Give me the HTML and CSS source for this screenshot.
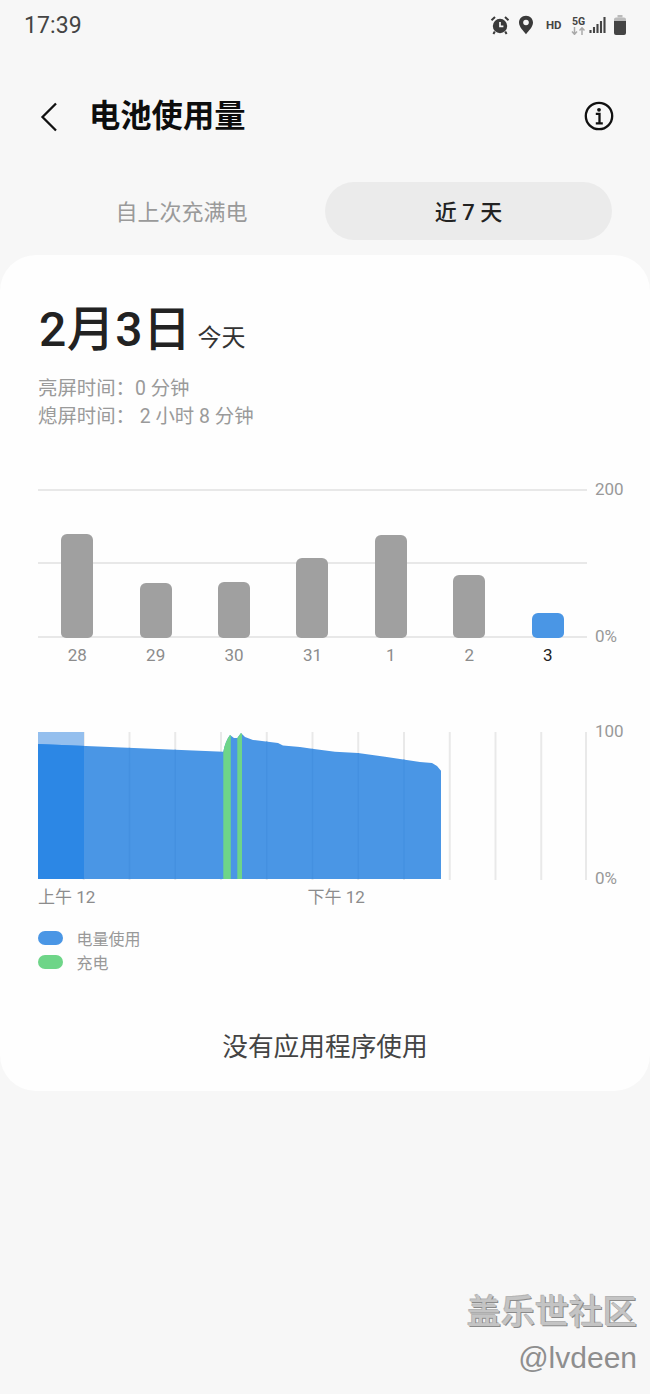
FILE: index.html
```html
<!DOCTYPE html>
<html lang="zh-CN">
<head>
<meta charset="utf-8">
<title>电池使用量</title>
<link rel="stylesheet" href="styles.css">
</head>
<body>
<div class="phone">
  <div class="status">
    <span class="clock">17:39</span>
    <div class="status-icons">
      <svg class="ic-alarm" width="20" height="20" viewBox="0 0 20 20"><circle cx="10" cy="11" r="7.2" fill="#3a3a3a"/><path d="M10 7v4.4h3.4" fill="none" stroke="#f7f7f7" stroke-width="1.7"/><path d="M1.5 5.2 5 2M18.5 5.2 15 2M4.8 16.5 3.4 19M15.2 16.5 16.6 19" stroke="#3a3a3a" stroke-width="2" fill="none"/></svg>
      <svg class="ic-pin" width="16" height="20" viewBox="0 0 16 20"><path d="M8 .8C3.8.8 1 3.9 1 7.6c0 4.6 4.7 8.6 7 11.6 2.300-3 7-7 7-11.600C15 3.900 12.200.8 8 .8Z" fill="#3a3a3a"/><circle cx="8" cy="7.500" r="2.800" fill="#f7f7f7"/></svg>
      <span class="hd">HD</span>
      <div class="net">
        <span class="five-g">5G</span>
        <svg width="15" height="8" viewBox="0 0 15 8"><path d="M3.500 0v7M1 4.500l2.500 2.800L6 4.500" fill="none" stroke="#aaa" stroke-width="1.500"/><path d="M11 8V1M8.500 3.500 11 .8l2.500 2.700" fill="none" stroke="#aaa" stroke-width="1.500"/></svg>
      </div>
      <svg class="ic-signal" width="17" height="18" viewBox="0 0 17 18"><path d="M1.500 14v3M5 11v6M8.500 8v9M12 5v12M15.500 1v16" stroke="#444" stroke-width="2.100"/></svg>
      <svg class="ic-battery" width="14" height="20" viewBox="0 0 14 20"><path d="M4.500 0h5v2.500h-5z" fill="#bbb"/><path d="M1 4.500A2 2 0 0 1 3 2.500h8a2 2 0 0 1 2 2V6H1z" fill="#bbb"/><path d="M1 6h12v12a2 2 0 0 1-2 2H3a2 2 0 0 1-2-2z" fill="#444"/></svg>
    </div>
  </div>

  <header class="appbar">
    <svg class="back" width="18" height="30" viewBox="0 0 18 30"><path d="M16 1.500 2.500 15 16 28.500" fill="none" stroke="#111" stroke-width="2.300"/></svg>
    <h1 class="title">电池使用量</h1>
    <svg class="info" width="30" height="30" viewBox="0 0 30 30"><circle cx="15" cy="15" r="13.200" fill="none" stroke="#111" stroke-width="2.300"/><circle cx="15" cy="8.800" r="1.900" fill="#111"/><path d="M11.800 12.800H15.500V22M11.800 22.300h7" fill="none" stroke="#111" stroke-width="2.300"/></svg>
  </header>

  <div class="tabs">
    <div class="tab">自上次充满电</div>
    <div class="tab tab-active">近 7 天</div>
  </div>

  <main class="card">
    <div class="date-row">
      <span class="date">2月3日</span>
      <span class="today">今天</span>
    </div>
    <div class="stats">
      <div>亮屏时间：0 分钟</div>
      <div>熄屏时间： 2 小时 8 分钟</div>
    </div>

    <section class="chart bar-chart">
      <div class="plot bar-plot">
        <div class="col"><div class="bar" style="height:104px"></div></div>
        <div class="col"><div class="bar" style="height:55px"></div></div>
        <div class="col"><div class="bar" style="height:56px"></div></div>
        <div class="col"><div class="bar" style="height:80px"></div></div>
        <div class="col"><div class="bar" style="height:103px"></div></div>
        <div class="col"><div class="bar" style="height:63px"></div></div>
        <div class="col"><div class="bar bar-now" style="height:25px"></div></div>
      </div>
      <div class="axis axis-bar"><span>200</span><span>0%</span></div>
      <div class="days">
        <span>28</span><span>29</span><span>30</span><span>31</span><span>1</span><span>2</span><span class="day-now">3</span>
      </div>
    </section>

    <section class="chart area-chart">
      <svg class="area" width="549" height="150" viewBox="38 731 549 150">
        <defs>
          <clipPath id="fill-clip"><path d="M38 744 223.300 751.700C224.500 745 227 739 230 735L234 738 237.300 738 241 733 245 737 253 740 278 743 283 745.500 300 747 312 748.700 335 751.700 358 753 385 756.700 420 762 432 763 437 766 441 770.700V879H38Z"/></clipPath>
        </defs>
        <path d="M83.750 732V880M129.500 732V880M175.250 732V880M221 732V880M266.750 732V880M312.500 732V880M358.250 732V880M404 732V880M449.750 732V880M495.500 732V880M541.250 732V880M586 732V880" stroke="#e9e9e9" stroke-width="2"/>
        <rect x="38" y="732" width="46" height="14" fill="#94bfee"/>
        <g clip-path="url(#fill-clip)">
          <rect x="38" y="731" width="404" height="149" fill="#4a96e5"/>
          <rect x="38" y="731" width="46" height="149" fill="#2c87e5"/>
          <rect x="223.300" y="731" width="7.500" height="149" fill="#6ed588"/>
          <rect x="237.300" y="731" width="4.700" height="149" fill="#6ed588"/>
          <path d="M129.500 732V880M175.250 732V880M266.750 732V880M312.500 732V880M358.250 732V880M404 732V880" stroke="#4490e0" stroke-width="1.500"/>
        </g>
      </svg>
      <div class="axis axis-area"><span>100</span><span>0%</span></div>
      <div class="times"><span>上午 12</span><span>下午 12</span></div>
    </section>

    <ul class="legend">
      <li><i class="dot dot-blue"></i>电量使用</li>
      <li><i class="dot dot-green"></i>充电</li>
    </ul>

    <p class="empty">没有应用程序使用</p>
  </main>

  <div class="watermark">
    <div class="wm-cn">盖乐世社区</div>
    <div class="wm-en">@lvdeen</div>
  </div>
</div>
</body>
</html>
```

FILE: styles.css
```css
* { box-sizing: border-box; }
html, body { margin: 0; padding: 0; }
body {
  background: #f7f7f7;
  font-family: Roboto, "Noto Sans CJK SC", sans-serif;
  color: #222;
}
.phone {
  position: relative;
  width: 650px;
  height: 1394px;
  overflow: hidden;
}

/* status bar */
.status {
  height: 50px;
  padding: 0 23px 0 24px;
  display: flex;
  align-items: center;
  justify-content: space-between;
}
.clock { font-size: 23px; font-weight: 400; color: #444; letter-spacing: .1px; }
.status-icons { display: flex; align-items: center; }
.ic-pin { margin-left: 8px; }
.hd { margin-left: 12px; font-size: 11.500px; font-weight: 700; color: #444; width: 18px; }
.net { margin-left: 7px; display: flex; flex-direction: column; align-items: center; line-height: 1; }
.five-g { font-size: 10.500px; font-weight: 700; color: #444; line-height: 11px; }
.ic-signal { margin-left: 3px; }
.ic-battery { margin-left: 7px; }

/* app bar */
.appbar {
  height: 60px;
  margin-top: 37px;
  padding: 0 36px 0 40px;
  display: flex;
  align-items: center;
}
.title {
  margin: 0 0 0 31px;
  flex: 1;
  font-size: 31.300px;
  line-height: 60px;
  font-weight: 700;
  color: #0d0d0d;
}
.info { margin-top: -2px; }

/* tabs */
.tabs {
  margin-top: 35px;
  padding: 0 38px;
  display: grid;
  grid-template-columns: 287px 287px;
}
.tab {
  height: 58px;
  line-height: 61px;
  text-align: center;
  font-size: 22px;
  color: #9a9a9a;
}
.tab-active {
  background: #ebebeb;
  border-radius: 29px;
  color: #222;
  font-weight: 500;
}

/* card */
.card {
  height: 836px;
  margin-top: 15px;
  padding: 47px 0 0 38px;
  background: #fefefe;
  border-radius: 36px;
}
.date-row { display: flex; align-items: baseline; height: 56px; }
.date { font-size: 48px; line-height: 56px; font-weight: 500; color: #222; letter-spacing: .5px; margin-left: 1px; }
.today { margin-left: 6px; font-size: 24px; color: #333; }
.stats {
  margin-top: 17px;
  font-size: 19.400px;
  line-height: 27.500px;
  color: #9a9a9a;
}

/* charts */
.chart {
  display: grid;
  grid-template-columns: 549px 1fr;
  column-gap: 8px;
}
.bar-chart { margin-top: 59px; }
.area-chart { margin-top: 64px; }
.plot { height: 149px; }
.bar-plot {
  display: flex;
  background:
    linear-gradient(#e8e8e8, #e8e8e8) 0 0 / 100% 2px no-repeat,
    linear-gradient(#e8e8e8, #e8e8e8) 0 73px / 100% 2px no-repeat,
    linear-gradient(#e8e8e8, #e8e8e8) 0 147px / 100% 2px no-repeat;
}
.col { flex: 1; display: flex; justify-content: center; align-items: flex-end; }
.bar {
  width: 32px;
  background: #a0a0a0;
  border-radius: 6px 6px 5px 5px;
}
.bar-now { background: #4a96e5; }
.axis {
  display: flex;
  flex-direction: column;
  justify-content: space-between;
  font-size: 17px;
  line-height: 20px;
  color: #999;
}
.axis-bar { height: 167px; margin: -10px 0 -20px; }
.axis-area { height: 167px; margin: -10px 0 -20px; }
.days {
  grid-column: 1;
  margin-top: 5px;
  display: flex;
  font-size: 17px;
  line-height: 24px;
  color: #8c8c8c;
}
.days span { flex: 1; text-align: center; }
.days .day-now { color: #222; }
.area { display: block; }
.times {
  grid-column: 1;
  margin-top: 5px;
  display: grid;
  grid-template-columns: 269.500px 1fr;
  font-size: 17px;
  line-height: 22px;
  color: #8c8c8c;
}

/* legend */
.legend { margin: 18px 0 0; padding: 0; list-style: none; }
.legend li {
  height: 24px;
  display: flex;
  align-items: center;
  font-size: 16px;
  color: #999;
}
.dot { width: 25px; height: 14px; border-radius: 7px; margin-right: 13.500px; }
.dot-blue { background: #4a96e5; }
.dot-green { background: #6ed588; }

.empty {
  margin: 53px 0 0 -38px;
  text-align: center;
  font-size: 25.700px;
  line-height: 40px;
  color: #444;
}

/* watermark */
.watermark {
  position: absolute;
  right: 13px;
  top: 1289px;
  text-align: right;
}
.wm-cn {
  font-size: 34px;
  line-height: 46px;
  font-weight: 500;
  color: #c4c4c4;
  text-shadow: 1px 1px 0 #8a8a8a, -1px -1px 0 #b4b4b4;
}
.wm-en {
  margin-top: 3px;
  font-family: "Liberation Sans", sans-serif;
  font-size: 30px;
  line-height: 40px;
  color: #8e8e8e;
}
```
